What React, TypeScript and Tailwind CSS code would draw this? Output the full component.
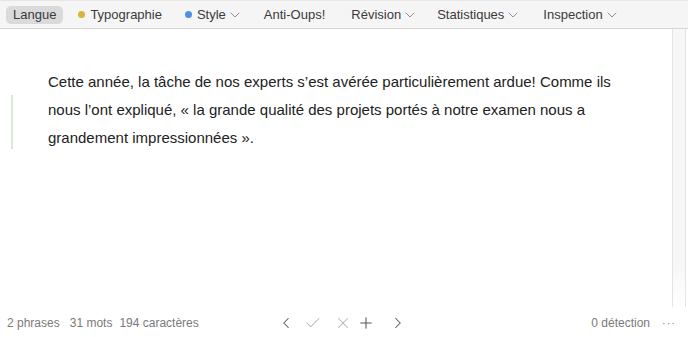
import { ChevronDown, ChevronLeft, ChevronRight, Check, X, Plus } from 'lucide-react';

const font = { fontFamily: '"Liberation Sans", Arial, sans-serif' };

function Tab({ label, dot, chevron, active, className = '' }: { label: string; dot?: string; chevron?: boolean; active?: boolean; className?: string }) {
  return (
    <div
      className={`flex h-[18px] shrink-0 items-center whitespace-nowrap rounded-[5px] text-[13px] text-[#3a3a3a] ${active ? 'bg-[#dadada] px-[7px]' : ''} ${className}`}
    >
      {dot && <span className={`mr-[5px] h-[7px] w-[7px] rounded-full ${dot}`} />}
      <span>{label}</span>
      {chevron && <ChevronDown className="ml-[1px] h-[16px] w-[16px] text-[#808080]" strokeWidth={1.3} />}
    </div>
  );
}

export default function App() {
  return (
    <div className="flex h-[337px] w-[688px] flex-col overflow-hidden bg-white" style={font}>
      <div className="flex h-[29px] shrink-0 items-center border-t border-b border-t-[#e6e6e6] border-b-[#d6d6d6] bg-[#f6f5f5] pl-[6px]">
        <Tab label="Langue" active />
        <Tab label="Typographie" dot="bg-[#dcb338]" className="ml-[15px]" />
        <Tab label="Style" dot="bg-[#4f8fe6]" chevron className="ml-[23px]" />
        <Tab label="Anti-Oups!" className="ml-[21px]" />
        <Tab label="Révision" chevron className="ml-[26px]" />
        <Tab label="Statistiques" chevron className="ml-[19px]" />
        <Tab label="Inspection" chevron className="ml-[22px]" />
      </div>

      <div className="flex min-h-0 flex-1">
        <div className="relative flex-1 pl-[48px] pr-[30px] pt-[39px]">
          <div className="absolute left-[11px] top-[66px] h-[54px] w-[2px] bg-[#d6ecd1]" />
          <p className="text-[15px] leading-[28px] text-[#222]">
            Cette année, la tâche de nos experts s’est avérée particulièrement ardue! Comme ils nous l’ont expliqué, « la grande qualité des projets portés à notre examen nous a grandement impressionnées ».
          </p>
        </div>
        <div className="mr-[2px] w-[14px] border-x border-[#e4e4e4] bg-gradient-to-b from-[#f7f7f7] from-85% to-white" />
      </div>

      <div className="flex h-[30px] shrink-0 items-center pt-[2px] text-[12px] text-[#7a7a7a]">
        <div className="flex w-[277px] pl-[7px]">
          <span>2 phrases</span>
          <span className="ml-[10px]">31 mots</span>
          <span className="ml-[7px]">194 caractères</span>
        </div>
        <div className="flex items-center">
          <ChevronLeft className="h-[18px] w-[18px] text-[#555]" strokeWidth={1.4} />
          <Check className="ml-[9px] h-[18px] w-[18px] text-[#b5b5b5]" strokeWidth={1.4} />
          <X className="ml-[12px] h-[18px] w-[18px] text-[#b5b5b5]" strokeWidth={1.4} />
          <Plus className="ml-[5px] h-[18px] w-[18px] text-[#555]" strokeWidth={1.4} />
          <ChevronRight className="ml-[14px] h-[18px] w-[18px] text-[#555]" strokeWidth={1.4} />
        </div>
        <div className="flex-1" />
        <span>0 détection</span>
        <span className="ml-[12px] mr-[12px] text-[11px] tracking-[1px] text-[#888]">···</span>
      </div>
    </div>
  );
}
